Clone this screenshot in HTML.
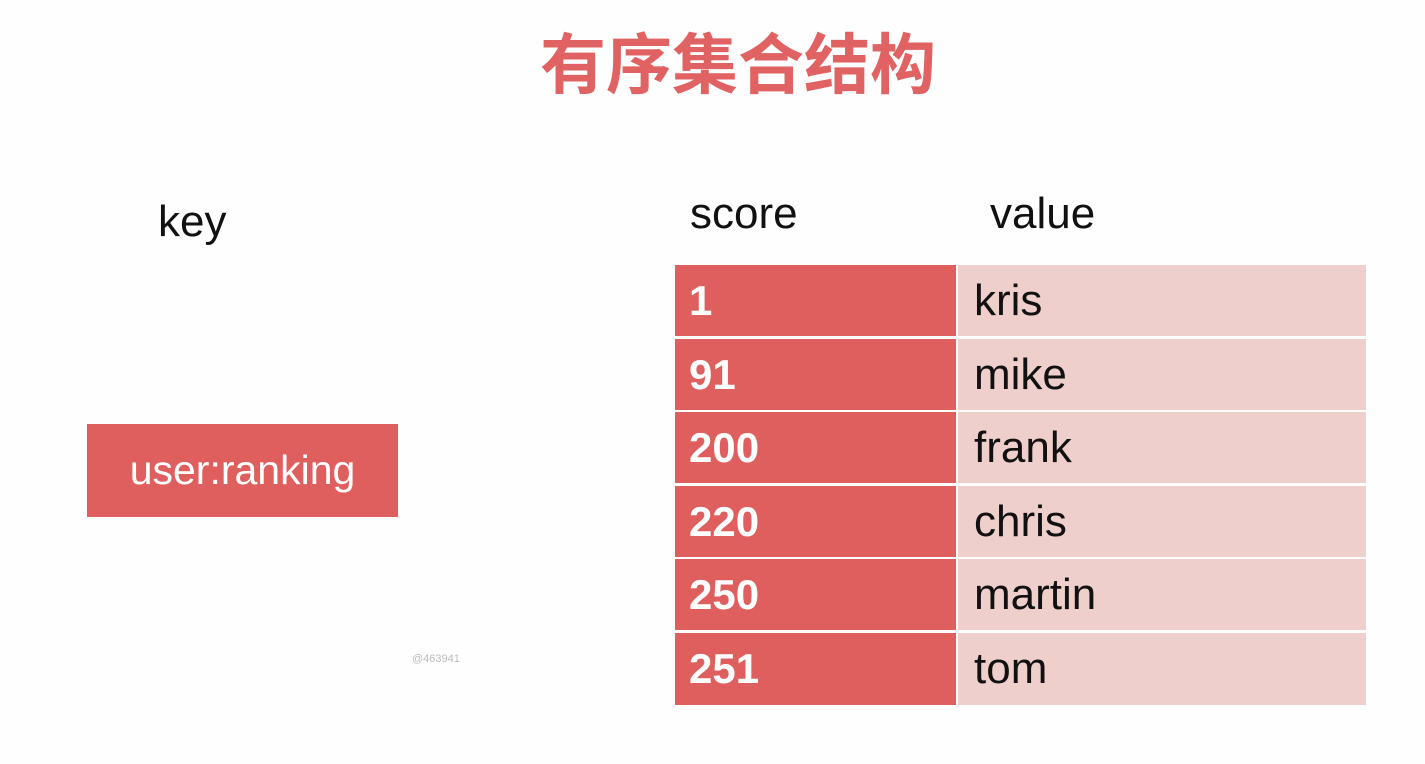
<!DOCTYPE html>
<html><head><meta charset="utf-8"><style>
body{margin:0;width:1425px;height:764px;background:#fefefe;position:relative;overflow:hidden;font-family:"Liberation Sans","Noto Sans CJK SC",sans-serif}
.a{position:absolute}
.t{left:540px;top:15px;font-size:66px;font-weight:bold;color:#e06262;letter-spacing:0px;font-family:"Noto Sans CJK SC",sans-serif;line-height:90px;white-space:nowrap}
.h{font-size:44px;color:#111;line-height:50px}
.l{left:675px;width:281px;height:71px;background:#df5f5e;color:#fff;font-weight:bold;font-size:42px;line-height:71px;box-sizing:border-box;padding-left:14px}
.r{left:958px;width:408px;height:71px;background:#efcfcc;color:#111;font-size:44px;line-height:71px;box-sizing:border-box;padding-left:16px}
</style></head><body>
<div class="a t">有序集合结构</div>
<div class="a h" style="left:158px;top:197px">key</div>
<div class="a h" style="left:690px;top:189px">score</div>
<div class="a h" style="left:990px;top:189px">value</div>
<div class="a" style="left:87px;top:424px;width:311px;height:93px;background:#df5f5e;color:#fff;font-size:41px;line-height:93px;text-align:center">user:ranking</div>
<div class="a" style="left:412px;top:653px;font-size:11px;color:#bbb">@463941</div>
<div class="a l" style="top:265px">1</div><div class="a r" style="top:265px">kris</div>
<div class="a l" style="top:339px">91</div><div class="a r" style="top:339px">mike</div>
<div class="a l" style="top:412px">200</div><div class="a r" style="top:412px">frank</div>
<div class="a l" style="top:486px">220</div><div class="a r" style="top:486px">chris</div>
<div class="a l" style="top:559px">250</div><div class="a r" style="top:559px">martin</div>
<div class="a l" style="top:633px;height:72px">251</div><div class="a r" style="top:633px;height:72px">tom</div>
</body></html>
